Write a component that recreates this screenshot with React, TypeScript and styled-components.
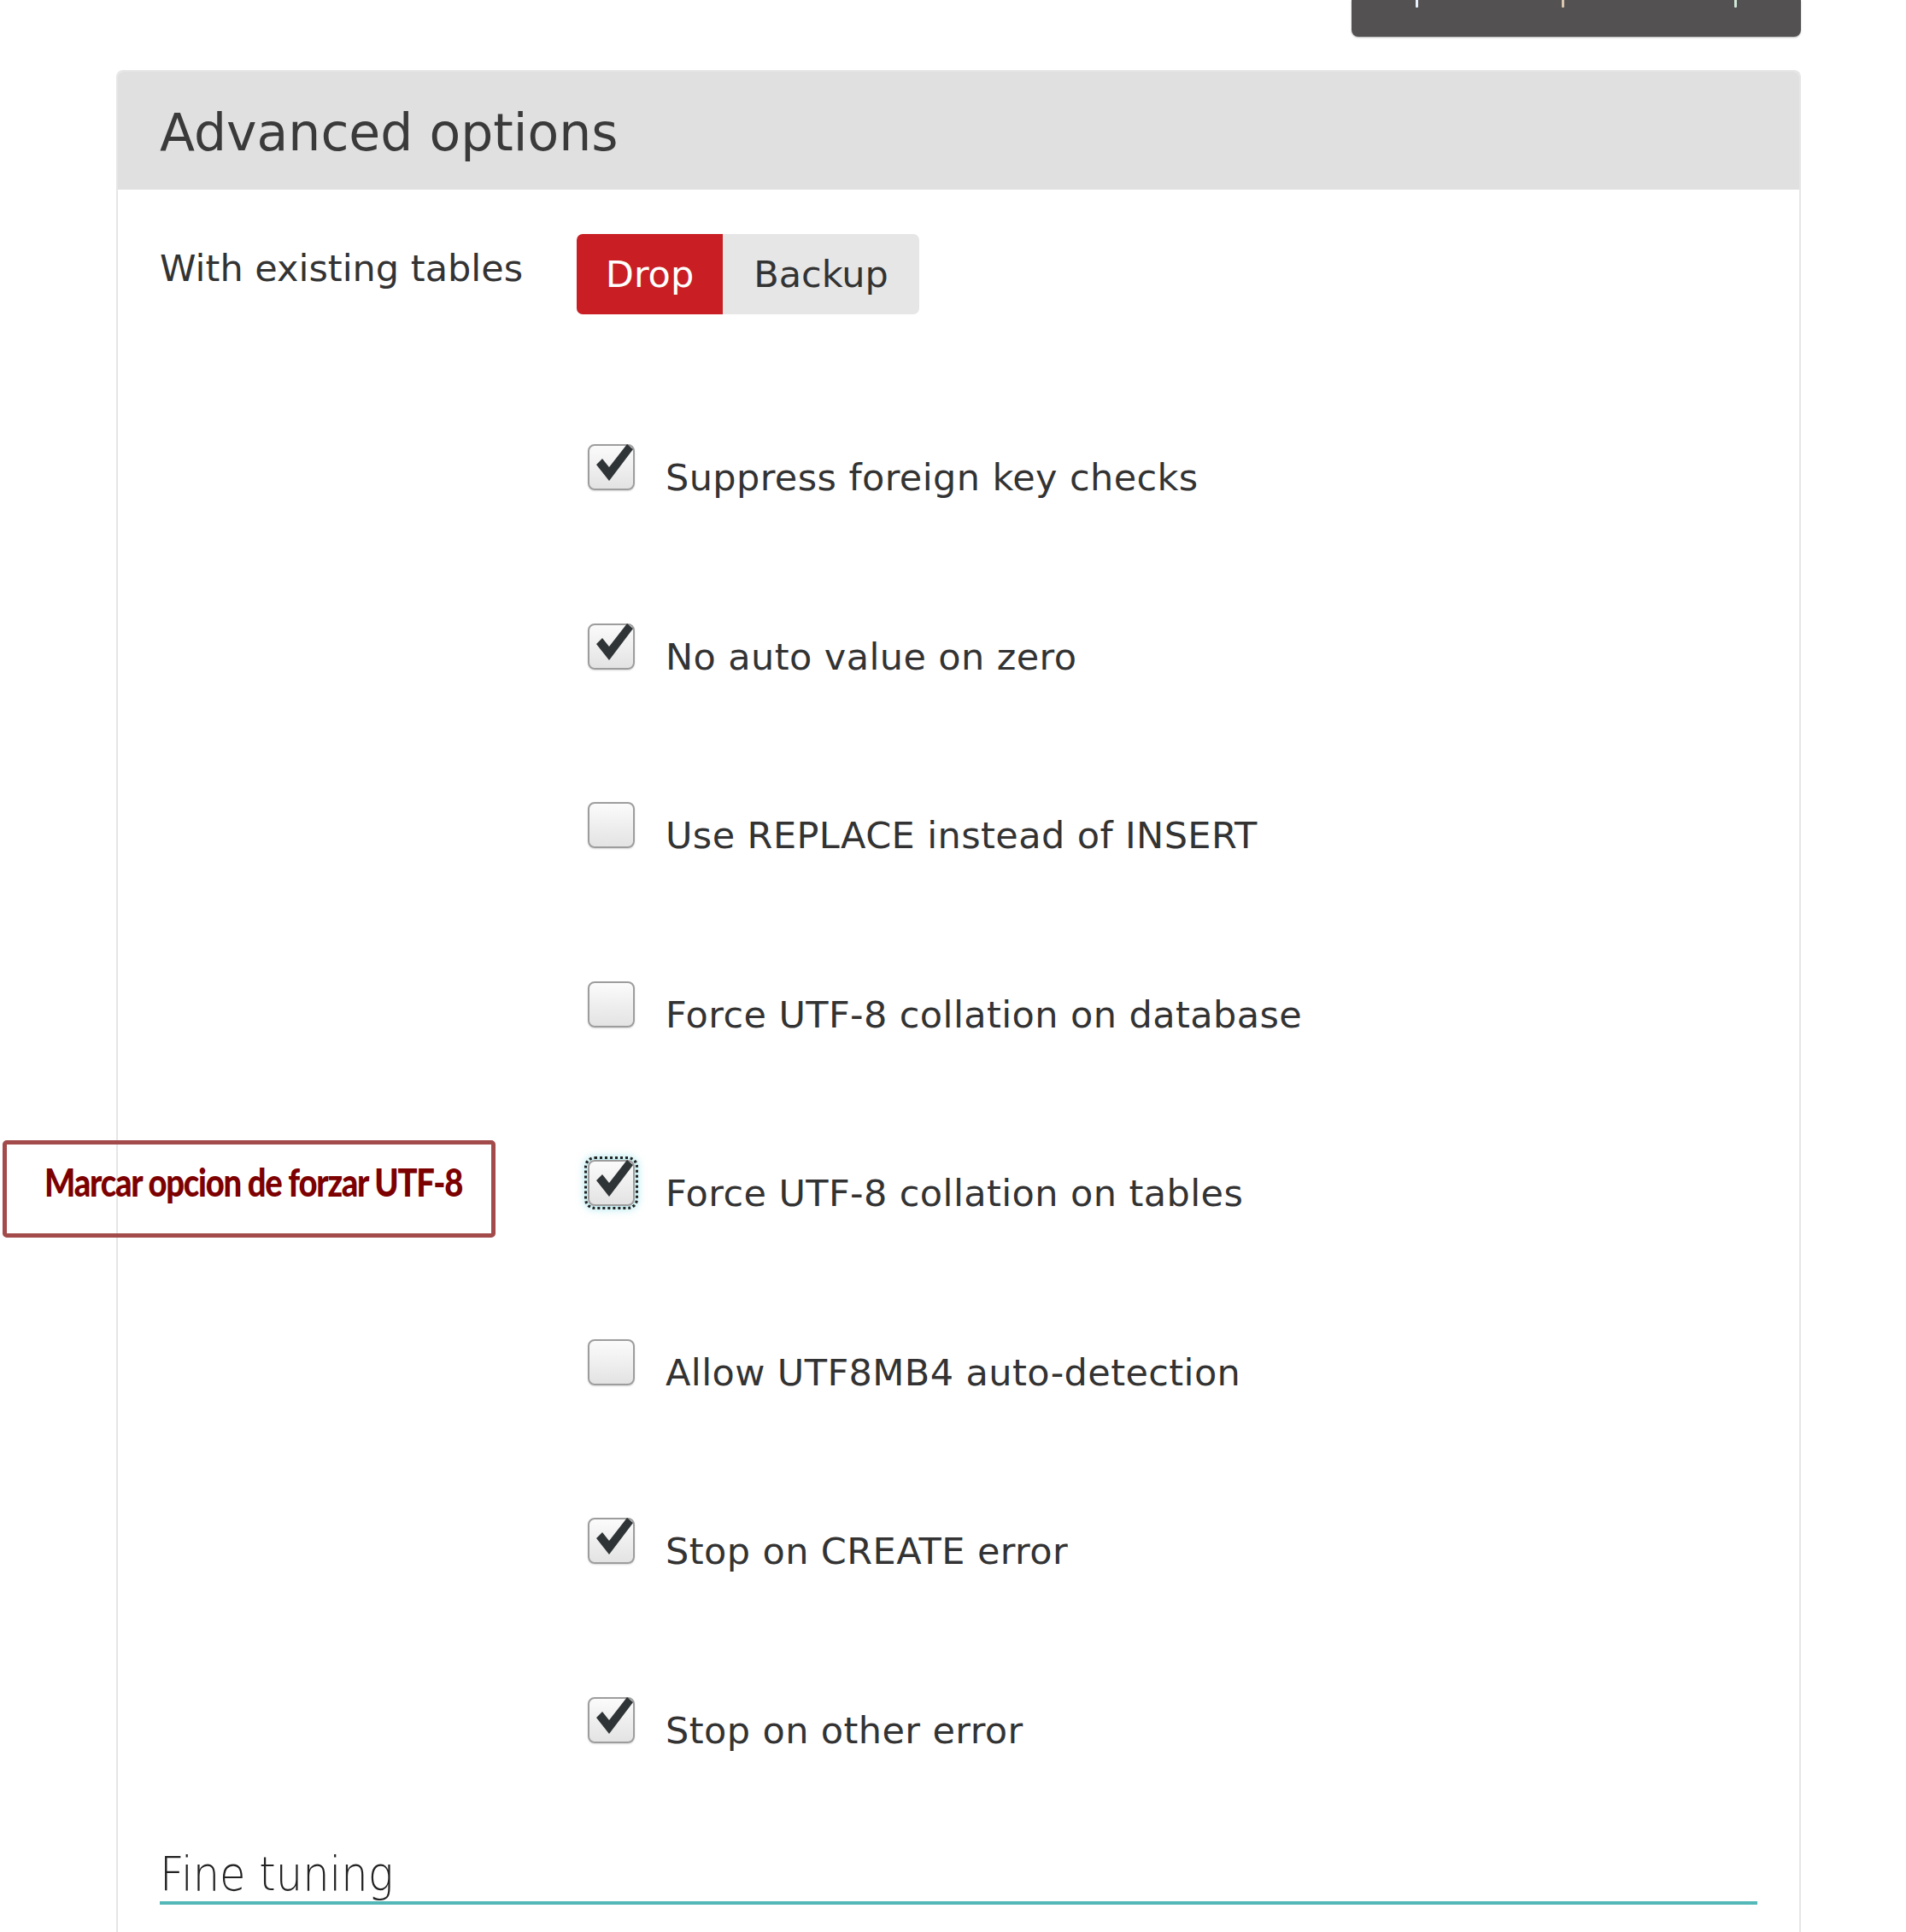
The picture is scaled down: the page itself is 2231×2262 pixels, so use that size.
import React from "react";
import styled, { createGlobalStyle, css } from "styled-components";

const GlobalStyle = createGlobalStyle`
  html, body {
    margin: 0;
    padding: 0;
    background: #fff;
  }
  body {
    font-family: "DejaVu Sans", "Liberation Sans", sans-serif;
    color: #333;
  }
`;

const Page = styled.div`
  position: relative;
  width: 2231px;
  height: 2262px;
  overflow: hidden;
`;

const TopBar = styled.div`
  position: relative;
  margin-left: 1582px;
  width: 526px;
  height: 43px;
  background: #535151;
  border-radius: 0 0 8px 8px;
  box-shadow: 0 1px 2px rgba(0, 0, 0, 0.3);
`;

const Speck = styled.span<{ $left: number; $color: string }>`
  position: absolute;
  top: 0;
  left: ${({ $left }) => $left}px;
  width: 3px;
  height: 9px;
  background: ${({ $color }) => $color};
  border-radius: 0 0 2px 2px;
`;

const Panel = styled.section`
  margin: 39px 0 0 136px;
  width: 1972px;
  min-height: 2200px;
  box-sizing: border-box;
  border: 2px solid #e6e6e6;
  border-bottom: none;
  border-radius: 8px 8px 0 0;
`;

const Header = styled.header`
  display: flex;
  align-items: center;
  height: 138px;
  padding: 4px 0 0 49px;
  box-sizing: border-box;
  background: #e0e0e0;
  border-radius: 6px 6px 0 0;
`;

const Title = styled.h2`
  margin: 0;
  font-size: 60px;
  font-weight: normal;
  color: #3a3a3a;
`;

const Body = styled.div`
  padding: 52px 49px 0 49px;
`;

const FieldRow = styled.div`
  display: grid;
  grid-template-columns: 488px auto;
  align-items: start;
`;

const FieldLabel = styled.div`
  font-size: 43px;
  line-height: 80px;
  color: #333;
`;

const Toggle = styled.div`
  display: inline-flex;
  height: 94px;
  border-radius: 7px;
  overflow: hidden;
  width: max-content;
`;

const ToggleButton = styled.span<{ $active?: boolean }>`
  display: flex;
  align-items: center;
  justify-content: center;
  font-size: 43px;
  ${({ $active }) =>
    $active
      ? css`
          width: 171px;
          background: #c81e24;
          color: #fff;
        `
      : css`
          width: 230px;
          background: #e6e6e6;
          color: #333;
        `}
`;

const OptionList = styled.div`
  margin-top: 82px;
  padding-left: 501px;
`;

const Option = styled.label`
  display: flex;
  align-items: baseline;
  gap: 36px;
  height: 209.5px;
  padding-top: 70px;
  box-sizing: border-box;
  font-size: 43px;
  letter-spacing: 0.4px;
  color: #333;
`;

const Box = styled.span<{ $focused?: boolean }>`
  position: relative;
  display: inline-block;
  flex: none;
  width: 55px;
  height: 54px;
  box-sizing: border-box;
  border: 2px solid #9d9d9d;
  border-radius: 8px;
  background: linear-gradient(#fbfbfb, #e3e3e3);
  box-shadow: 0 1px 2px rgba(0, 0, 0, 0.15);
  ${({ $focused }) =>
    $focused &&
    css`
      outline: 3px dotted #222;
      outline-offset: 1px;
      box-shadow: 0 0 10px 4px rgba(120, 215, 225, 0.55);
    `}
`;

const Check = styled.svg`
  position: absolute;
  left: 4px;
  top: -4px;
  width: 48px;
  height: 52px;
`;

const FineTuning = styled.h3`
  margin: 36px 0 0 0;
  font-size: 56px;
  font-weight: 200;
  line-height: 64px;
  color: #222;
  border-bottom: 4px solid #55b8b8;
`;

const Narrow = styled.span`
  display: inline-block;
  transform: scaleX(0.885);
  transform-origin: left center;
`;

const Callout = styled.div`
  position: absolute;
  left: 3px;
  top: 1335px;
  width: 577px;
  height: 114px;
  box-sizing: border-box;
  border: 5px solid #a34a4a;
  border-radius: 5px;
  display: flex;
  justify-content: center;
  padding-top: 16px;
`;

const CalloutText = styled.span`
  font-family: Lato, "Liberation Sans", sans-serif;
  font-weight: 900;
  font-size: 46px;
  letter-spacing: -1.5px;
  color: #7d0000;
  white-space: nowrap;
  transform: translateX(5px) scaleX(0.83);
`;

type Item = { label: string; checked: boolean; focused?: boolean };

const items: Item[] = [
  { label: "Suppress foreign key checks", checked: true },
  { label: "No auto value on zero", checked: true },
  { label: "Use REPLACE instead of INSERT", checked: false },
  { label: "Force UTF-8 collation on database", checked: false },
  { label: "Force UTF-8 collation on tables", checked: true, focused: true },
  { label: "Allow UTF8MB4 auto-detection", checked: false },
  { label: "Stop on CREATE error", checked: true },
  { label: "Stop on other error", checked: true },
];

const Checkbox = ({ checked, focused }: { checked: boolean; focused?: boolean }) => (
  <Box $focused={focused}>
    {checked && (
      <Check viewBox="0 0 48 52">
        <path d="M4 26 L11 19 L19 29 L40 2 L47 8 L19 45 Z" fill="#2f3436" />
      </Check>
    )}
  </Box>
);

const App = () => (
  <Page>
    <GlobalStyle />
    <TopBar>
      <Speck $left={75} $color="#e8f2ff" />
      <Speck $left={246} $color="#d9c7b0" />
      <Speck $left={448} $color="#cfe8d8" />
    </TopBar>
    <Panel>
      <Header>
        <Title>Advanced options</Title>
      </Header>
      <Body>
        <FieldRow>
          <FieldLabel>With existing tables</FieldLabel>
          <Toggle>
            <ToggleButton $active>Drop</ToggleButton>
            <ToggleButton>Backup</ToggleButton>
          </Toggle>
        </FieldRow>
        <OptionList>
          {items.map((item) => (
            <Option key={item.label}>
              <Checkbox checked={item.checked} focused={item.focused} />
              <span>{item.label}</span>
            </Option>
          ))}
        </OptionList>
        <FineTuning>
          <Narrow>Fine tuning</Narrow>
        </FineTuning>
      </Body>
    </Panel>
    <Callout>
      <CalloutText>Marcar opcion de forzar UTF-8</CalloutText>
    </Callout>
  </Page>
);

export default App;
